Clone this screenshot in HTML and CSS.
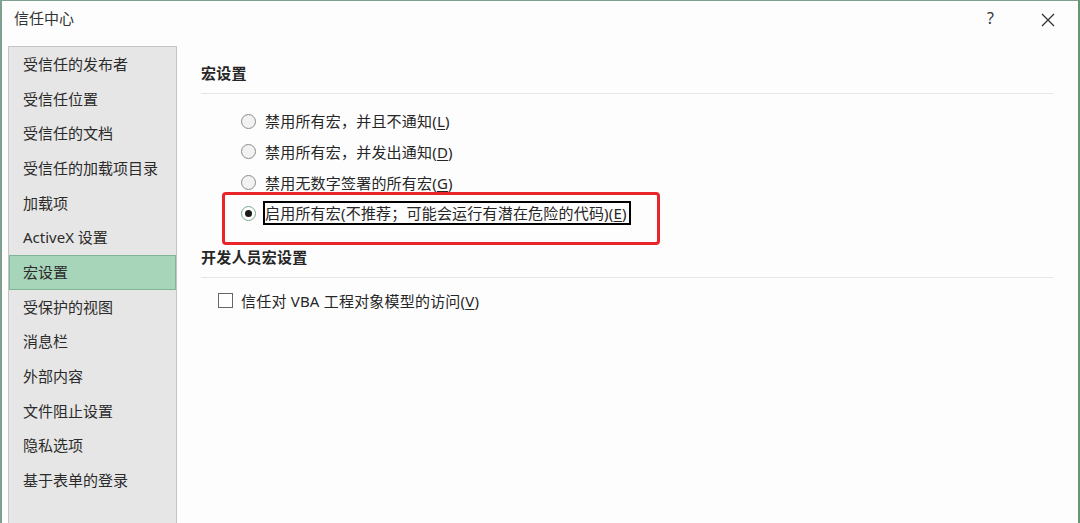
FILE: index.html
```html
<!DOCTYPE html>
<html lang="zh-CN">
<head>
  <meta charset="UTF-8" />
  <meta name="viewport" content="width=device-width, initial-scale=1.0"/>
  <title>信任中心</title>
  <link rel="stylesheet" href="styles.css">
</head>
<body>

  <div class="window">
    <!-- Title bar -->
    <div class="titlebar">
      <span class="title">信任中心</span>
      <div class="title-buttons">
        <span class="help-btn">?</span>
        <span class="close-btn">
          <svg width="14" height="14" viewBox="0 0 14 14">
            <path d="M1 1 L13 13 M13 1 L1 13" stroke="#333" stroke-width="1.3" fill="none"/>
          </svg>
        </span>
      </div>
    </div>

    <div class="dialog-body">
      <!-- Side navigation -->
      <ul class="sidebar">
        <li>受信任的发布者</li>
        <li>受信任位置</li>
        <li>受信任的文档</li>
        <li>受信任的加载项目录</li>
        <li>加载项</li>
        <li>ActiveX 设置</li>
        <li class="selected">宏设置</li>
        <li>受保护的视图</li>
        <li>消息栏</li>
        <li>外部内容</li>
        <li>文件阻止设置</li>
        <li>隐私选项</li>
        <li>基于表单的登录</li>
      </ul>

      <!-- Settings panel -->
      <div class="panel">
        <h2 class="group-title">宏设置</h2>
        <div class="options">
          <div class="option">
            <span class="radio"></span>
            <span class="option-label">禁用所有宏，并且不通知(<u>L</u>)</span>
          </div>
          <div class="option">
            <span class="radio"></span>
            <span class="option-label">禁用所有宏，并发出通知(<u>D</u>)</span>
          </div>
          <div class="option">
            <span class="radio"></span>
            <span class="option-label">禁用无数字签署的所有宏(<u>G</u>)</span>
          </div>
          <div class="option highlighted">
            <span class="radio checked"></span>
            <span class="option-label focused">启用所有宏(不推荐；可能会运行有潜在危险的代码)(<u>E</u>)</span>
            <span class="red-mark"></span>
          </div>
        </div>

        <h2 class="group-title second">开发人员宏设置</h2>
        <div class="check-row">
          <span class="checkbox"></span>
          <span class="option-label">信任对 VBA 工程对象模型的访问(<u>V</u>)</span>
        </div>
      </div>
    </div>
  </div>

</body>
</html>
```

FILE: styles.css
```css
body {
  margin: 0;
  font-family: 'Noto Sans', 'Noto Sans CJK SC', sans-serif;
  font-size: 15px;
  color: #262626;
  background-color: #fff;
  overflow: hidden;
}

.window {
  height: 523px;
  box-sizing: border-box;
  border-top: 1px solid #7fa08f;
  border-left: 2px solid #7fa08f;
  border-right: 2px solid #5f9a74;
  background-color: #fdfdfd;
  display: flex;
  flex-direction: column;
}

.titlebar {
  height: 45px;
  flex-shrink: 0;
  display: flex;
  align-items: flex-start;
  justify-content: space-between;
}

.title {
  margin-left: 12px;
  margin-top: 7px;
  line-height: 20px;
  color: #333;
}

.title-buttons {
  display: flex;
  align-items: center;
  margin-top: 7px;
  margin-right: 23px;
}

.help-btn {
  font-size: 16px;
  line-height: 20px;
  color: #333;
  margin-right: 47px;
}

.close-btn {
  display: flex;
  width: 14px;
  height: 14px;
  margin-top: 3px;
}

.dialog-body {
  flex: 1;
  display: flex;
  min-height: 0;
}

.sidebar {
  list-style: none;
  margin: 0 0 0 6px;
  padding: 0;
  width: 167px;
  flex-shrink: 0;
  background-color: #e6e6e6;
  border: 1px solid #c4c4c4;
  border-bottom: none;
}

.sidebar li {
  height: 34.67px;
  line-height: 34.67px;
  padding-left: 14px;
  color: #2b2b2b;
  box-sizing: border-box;
}

.sidebar li.selected {
  background-color: #a7d5b9;
  border: 1px solid #7fb697;
  line-height: 32.67px;
  padding-left: 13px;
}

.panel {
  flex: 1;
  padding: 17px 25px 0 24px;
  letter-spacing: 0.2px;
}

.group-title {
  margin: 0;
  font-size: 15px;
  font-weight: bold;
  line-height: 20px;
  padding-bottom: 10px;
  border-bottom: 1px solid #e6e6e6;
  color: #262626;
}

.group-title.second {
  margin-top: 18px;
}

.options {
  margin-top: 12px;
  padding-left: 40px;
}

.option {
  position: relative;
  height: 30.67px;
  display: flex;
  align-items: center;
}

.option-label {
  line-height: 20px;
  color: #262626;
}

.option-label u {
  text-underline-offset: 2px;
}

.radio {
  width: 13px;
  height: 13px;
  border: 1px solid #8c8c8c;
  border-radius: 50%;
  background-color: #f2f2f2;
  margin-right: 9px;
  flex-shrink: 0;
  box-sizing: content-box;
  position: relative;
}

.radio.checked {
  border-color: #78a98e;
  background-color: #fff;
}

.radio.checked::after {
  content: "";
  position: absolute;
  left: 3px;
  top: 3px;
  width: 7px;
  height: 7px;
  border-radius: 50%;
  background-color: #1a1a1a;
}

.option-label.focused {
  border: 2px solid #000;
  padding: 0 2px 0 0;
  margin-left: -2px;
}

/* red annotation drawn over the last option */
.red-mark {
  position: absolute;
  left: -19px;
  top: -6px;
  width: 438px;
  height: 53px;
  box-sizing: border-box;
  border: 3px solid #e8252b;
  border-radius: 4px;
}

.check-row {
  display: flex;
  align-items: center;
  height: 30px;
  margin-top: 8px;
  padding-left: 17px;
}

.checkbox {
  width: 13px;
  height: 13px;
  border: 1px solid #666;
  background-color: #fff;
  margin-right: 8px;
  flex-shrink: 0;
}
```
